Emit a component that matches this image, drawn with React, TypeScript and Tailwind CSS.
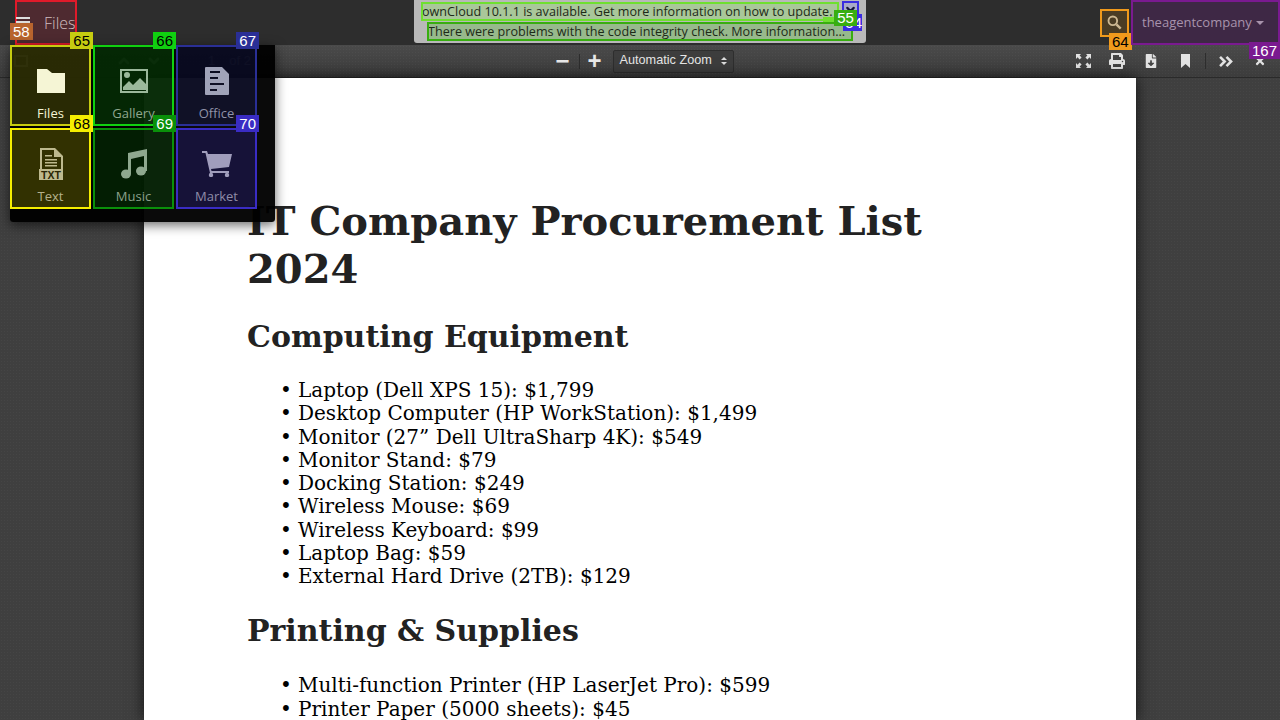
import React from 'react';
import { ChevronDown, ChevronUp } from 'lucide-react';
import { FaFileDownload, FaPrint, FaTimes } from 'react-icons/fa';

const Mark: React.FC<{ label: string; border: string; tag: string; text?: string; className: string; tagPos: string }> = ({
  label, border, tag, text = 'text-black', className, tagPos,
}) => (
  <div className={`absolute border-2 ${border} ${className}`}>
    <span className={`absolute ${tag} ${text} ${tagPos} px-[3px] h-[17px] leading-[17px] text-[15px] font-['Liberation_Sans',sans-serif]`}>
      {label}
    </span>
  </div>
);

const FolderIcon = () => (
  <svg viewBox="0 0 28 24" className="w-[28px] h-[24px]" fill="currentColor">
    <path d="M0 0h10l5 4h13v20H0z" />
  </svg>
);

const GalleryIcon = () => (
  <svg viewBox="0 0 28 24" className="w-[28px] h-[24px]" fill="currentColor">
    <path fillRule="evenodd" d="M0 0h28v24H0zM2 2v20h24V2z" />
    <circle cx="7" cy="6" r="3" />
    <path d="M3 21v-3l6-6 4 4 7-7 6 6v6z" />
  </svg>
);

const OfficeIcon = () => (
  <svg viewBox="0 0 24 28" className="w-[24px] h-[28px]" fill="currentColor">
    <path
      fillRule="evenodd"
      d="M1 0h16l7 7v20a1 1 0 0 1-1 1H1a1 1 0 0 1-1-1V1a1 1 0 0 1 1-1zM5 4v2h10V4zM5 10v2h8v-2zM5 16v2h14v-2zM5 22v2h7v-2z"
    />
  </svg>
);

const TxtIcon = () => (
  <svg viewBox="0 0 24 32" className="w-[24px] h-[32px]" fill="currentColor">
    <path fillRule="evenodd" d="M1 0h15l8 8v14h-2V9h-7V2H3v20H1z" />
    <path d="M6 7h7v1.5H6zM6 11h12v1.5H6zM6 14h12v1.5H6zM6 17h12v1.5H6z" />
    <rect x="0" y="21" width="24" height="11" />
    <text x="12" y="30.5" textAnchor="middle" fontSize="10.5" fontWeight="700" fill="#2a2604" fontFamily="Liberation Sans, sans-serif">TXT</text>
  </svg>
);

const MusicIcon = () => (
  <svg viewBox="0 0 26 30" className="w-[26px] h-[30px]" fill="currentColor">
    <ellipse cx="5" cy="25" rx="5" ry="4.5" />
    <ellipse cx="20" cy="22" rx="5" ry="4.5" />
    <path d="M7 25V4L26 0v22h-3V7L10 10v15z" />
  </svg>
);

const CartIcon = () => (
  <svg viewBox="0 0 30 26" className="w-[30px] h-[26px]" fill="currentColor">
    <path d="M0 0h5l1 3h24l-3 13-18 2 .5 2H27v2H8L3.5 2H0z" />
    <circle cx="9" cy="24" r="2.2" />
    <circle cx="25" cy="24" r="2.2" />
  </svg>
);

const FullscreenIcon = () => (
  <svg viewBox="0 0 15 14" className="w-[15px] h-[14px]" fill="currentColor">
    <path d="M0 0h5L3.6 1.4 5.6 3.4 3.6 5.4 1.6 3.3 0 5zM15 0v5l-1.6-1.7-2 2.1-2-2 2-2L10 0zM0 14V9l1.6 1.7 2-2.1 2 2-2 2L5 14zM15 14h-5l1.4-1.4-2-2 2-2 2 2.1L15 9z" />
  </svg>
);

const BookmarkIcon = () => (
  <svg viewBox="0 0 9 14" className="w-[9px] h-[14px]" fill="currentColor">
    <path d="M0 0h9v14L4.5 10 0 14z" />
  </svg>
);

const SearchGlyph = () => (
  <svg viewBox="0 0 16 16" className="w-[15px] h-[15px] text-[#cdb892]" fill="none" stroke="currentColor">
    <circle cx="6.2" cy="6.2" r="4.6" strokeWidth="2" />
    <path d="M10 10l4.6 4.6" strokeWidth="2.6" />
  </svg>
);

const apps = [
  { name: 'Files', icon: <FolderIcon />, tone: 'text-[#f5f5d5]', label: 'text-[#f5f5d5]', bg: 'bg-[#c6cc10]/20', border: 'border-[#c6cc10]', tag: 'bg-[#c6cc10]', id: '65' },
  { name: 'Gallery', icon: <GalleryIcon />, tone: 'text-[#9bb89b]', label: 'text-[#8fa68f]', bg: 'bg-[#10d010]/18', border: 'border-[#10d010]', tag: 'bg-[#10d010]', id: '66' },
  { name: 'Office', icon: <OfficeIcon />, tone: 'text-[#a0a3b8]', label: 'text-[#8f92a8]', bg: 'bg-[#2a2f96]/20', border: 'border-[#2a2f96]', tag: 'bg-[#2a2f96]', id: '67', tagText: 'text-white' },
  { name: 'Text', icon: <TxtIcon />, tone: 'text-[#bdb98e]', label: 'text-[#b5b18c]', bg: 'bg-[#f5ee00]/20', border: 'border-[#f5ee00]', tag: 'bg-[#f5ee00]', id: '68' },
  { name: 'Music', icon: <MusicIcon />, tone: 'text-[#8fa88f]', label: 'text-[#8aa08a]', bg: 'bg-[#0a900a]/20', border: 'border-[#0a900a]', tag: 'bg-[#0a900a]', id: '69', tagText: 'text-white' },
  { name: 'Market', icon: <CartIcon />, tone: 'text-[#a09dbc]', label: 'text-[#8f8ca8]', bg: 'bg-[#3a2cc4]/25', border: 'border-[#3a2cc4]', tag: 'bg-[#3a2cc4]', id: '70', tagText: 'text-white' },
];

const section1 = [
  'Laptop (Dell XPS 15): $1,799',
  'Desktop Computer (HP WorkStation): $1,499',
  'Monitor (27” Dell UltraSharp 4K): $549',
  'Monitor Stand: $79',
  'Docking Station: $249',
  'Wireless Mouse: $69',
  'Wireless Keyboard: $99',
  'Laptop Bag: $59',
  'External Hard Drive (2TB): $129',
];

const section2 = ['Multi-function Printer (HP LaserJet Pro): $599', 'Printer Paper (5000 sheets): $45'];

const Bullets: React.FC<{ items: string[] }> = ({ items }) => (
  <ul className="pl-[33px] text-[20px] leading-[23.25px] text-black">
    {items.map(i => (
      <li key={i} className="flex">
        <span className="w-[18px] shrink-0">•</span>
        <span>{i}</span>
      </li>
    ))}
  </ul>
);

const ToolButton: React.FC<{ children: React.ReactNode }> = ({ children }) => (
  <div className="w-[34px] flex justify-center">{children}</div>
);

export default function App() {
  return (
    <div className="relative w-[1280px] h-[720px] overflow-hidden bg-[#3f3f3f] font-['Open_Sans',sans-serif]">
      {/* Top bar */}
      <header className="h-[45px] bg-[#2d2d2d] flex items-center justify-between">
        <div className="flex items-center pl-[15px] h-full">
          <div className="w-[62px] h-full bg-[#4e2a30] flex items-center pl-[29px] text-[16px] font-light text-[#d0bcbf] overflow-hidden">Files</div>
        </div>
        <div className="flex items-center h-full">
          <div className="w-[29px] h-[28px] bg-[#4a3c24] flex items-center justify-center mr-[2px]">
            <SearchGlyph />
          </div>
          <div className="w-[149px] h-full bg-[#3e2845] flex items-center pl-[11px] gap-[4px] text-[13px] text-[#a893ac]">
            theagentcompany
            <span className="w-0 h-0 border-x-[4px] border-x-transparent border-t-[4px] border-t-[#a893ac]" />
          </div>
        </div>
      </header>

      {/* PDF toolbar */}
      <div className="h-[33px] bg-[#444444] bg-[radial-gradient(rgba(255,255,255,0.03)_1px,transparent_1px),linear-gradient(to_bottom,#4a4a4a,#3c3c3c)] bg-[length:3px_3px,100%_100%] border-b border-[#2a2a2a] grid grid-cols-[1fr_auto_1fr] items-center text-white">
        <div className="flex items-center pl-[14px] text-[#dddddd]">
          <div className="w-[14px] h-[12px] border-2 border-current" />
          <ChevronUp size={16} strokeWidth={4} className="ml-[88px]" />
          <ChevronDown size={16} strokeWidth={4} className="ml-[14px]" />
          <span className="ml-[46px] text-[13px] font-['Liberation_Sans',sans-serif]">1</span>
          <span className="ml-[14px] text-[13px] font-['Liberation_Sans',sans-serif]">of 2</span>
        </div>
        <div className="flex items-center">
          <span className="w-[32px] text-center text-[24px] leading-none font-bold font-['Liberation_Sans',sans-serif] text-[#e8e8e8]">−</span>
          <span className="w-px h-[15px] bg-[#2d2d2d]" />
          <span className="w-[30px] text-center text-[24px] leading-none font-bold font-['Liberation_Sans',sans-serif] text-[#e8e8e8]">+</span>
          <div className="ml-[3px] w-[121px] h-[23px] bg-[#3d3d3d] border border-[#2e2e2e] rounded-[2px] flex items-center justify-between pl-[6px] pr-[6px] text-[12.7px] text-[#e6e6e6] font-['Liberation_Sans',sans-serif]">
            Automatic Zoom
            <span className="flex flex-col gap-[2px]">
              <span className="w-0 h-0 border-x-[3px] border-x-transparent border-b-[3px] border-b-[#ddd]" />
              <span className="w-0 h-0 border-x-[3px] border-x-transparent border-t-[3px] border-t-[#ddd]" />
            </span>
          </div>
        </div>
        <div className="flex items-center justify-end pr-[3px] text-[#e2e2e2]">
          <ToolButton><FullscreenIcon /></ToolButton>
          <ToolButton><FaPrint size={16} /></ToolButton>
          <ToolButton><FaFileDownload size={14} /></ToolButton>
          <ToolButton><BookmarkIcon /></ToolButton>
          <span className="w-px h-[16px] bg-[#2d2d2d] mx-[3px]" />
          <ToolButton>
            <svg viewBox="0 0 16 12" className="w-[15px] h-[11px]" fill="none" stroke="currentColor" strokeWidth="2.8">
              <path d="M1 1l5 5-5 5M8 1l5 5-5 5" />
            </svg>
          </ToolButton>
          <ToolButton><FaTimes size={12} /></ToolButton>
        </div>
      </div>

      {/* Document */}
      <main className="h-[642px] bg-[#3f3f3f] bg-[radial-gradient(rgba(255,255,255,0.03)_1px,transparent_1px)] bg-[length:3px_3px] flex justify-center">
        <article className="w-[992px] bg-white shadow-[0_0_14px_rgba(0,0,0,0.75)] px-[103px] pt-[119px] font-['DejaVu_Serif',serif]">
          <h1 className="text-[40px] leading-[48px] font-bold text-[#222222]">IT Company Procurement List 2024</h1>
          <h2 className="mt-[26px] text-[30px] leading-[35px] font-bold text-[#222222]">Computing Equipment</h2>
          <div className="mt-[25px]"><Bullets items={section1} /></div>
          <h2 className="mt-[25px] text-[30px] leading-[35px] font-bold text-[#222222]">Printing &amp; Supplies</h2>
          <div className="mt-[26px]"><Bullets items={section2} /></div>
        </article>
      </main>

      {/* Update notification */}
      <div className="absolute left-[414px] top-0 w-[452px] h-[43px] bg-[#b9b9b9] rounded-b-[3px] text-[12.6px] text-[#1d2a18]">
        <div className="absolute left-[7px] top-[2px] w-[418px] h-[19px] bg-[#a9c79a] border-2 border-[#6fe030] leading-[15px] indent-[-1px] overflow-hidden whitespace-nowrap">ownCloud 10.1.1 is available. Get more information on how to update.</div>
        <div className="absolute left-[13px] top-[22px] w-[426px] h-[19px] bg-[#97b98c] border-2 border-[#38ae10] leading-[15px] indent-[-1px] truncate">There were problems with the code integrity check. More information…</div>
        <div className="absolute left-[428px] top-[1px] w-[17px] h-[17px] bg-[#a9a9c9] border-2 border-[#3a2ce0] flex items-center justify-center">
          <ChevronDown size={13} strokeWidth={4} className="text-[#16163a]" />
        </div>
        <span className="absolute left-[429px] top-[14px] w-[19px] h-[17px] bg-[#3a2ce0] text-white text-[15px] leading-[17px] text-right font-['Liberation_Sans',sans-serif]">54</span>
        <span className="absolute left-[409px] top-[17px] w-[12px] h-[5px] bg-[#6fe030]" />
        <span className="absolute left-[420px] top-[10px] w-[23px] h-[16px] bg-[#38ae10] text-white text-[15px] leading-[16px] text-center font-['Liberation_Sans',sans-serif]">55</span>
      </div>

      {/* Element marks under the menu */}
      <Mark label="58" border="border-[#e01a2a]" tag="bg-[#b8642e]" text="text-white" className="left-[15px] top-0 w-[62px] h-[45px]" tagPos="left-[-7px] top-[21px]" />
      <div className="absolute left-[16px] top-[17px] w-[14px] h-[6px] border-y-2 border-[#dddddd]" />
      <Mark label="64" border="border-[#f09a1c]" tag="bg-[#f09a1c]" className="left-[1100px] top-[9px] w-[29px] h-[28px]" tagPos="left-[7px] top-[22px]" />
      <Mark label="167" border="border-[#7a1a90]" tag="bg-[#7a1a90]" text="text-white" className="left-[1131px] top-0 w-[149px] h-[45px]" tagPos="right-[-2px] top-[40px]" />

      {/* App menu */}
      <div className="absolute left-[10px] top-[45px] w-[265px] h-[177px] bg-black/96 rounded-b-[3px] shadow-[0_3px_12px_rgba(0,0,0,0.6)]">
        <div className="grid grid-cols-3 gap-[2px] w-[247px]">
          {apps.map(a => (
            <div key={a.id} className={`relative h-[81px] border-2 ${a.border} ${a.bg} flex flex-col items-center`}>
              <div className={`h-[32px] mt-[18px] flex items-center ${a.tone}`}>{a.icon}</div>
              <span className={`mt-[8px] text-[13px] leading-[16px] ${a.label}`}>{a.name}</span>
              <span className={`absolute -top-[15px] right-[-4px] ${a.tag} ${a.tagText ?? 'text-black'} h-[17px] leading-[17px] px-[3px] text-[15px] font-['Liberation_Sans',sans-serif]`}>{a.id}</span>
            </div>
          ))}
        </div>
      </div>
    </div>
  );
}
